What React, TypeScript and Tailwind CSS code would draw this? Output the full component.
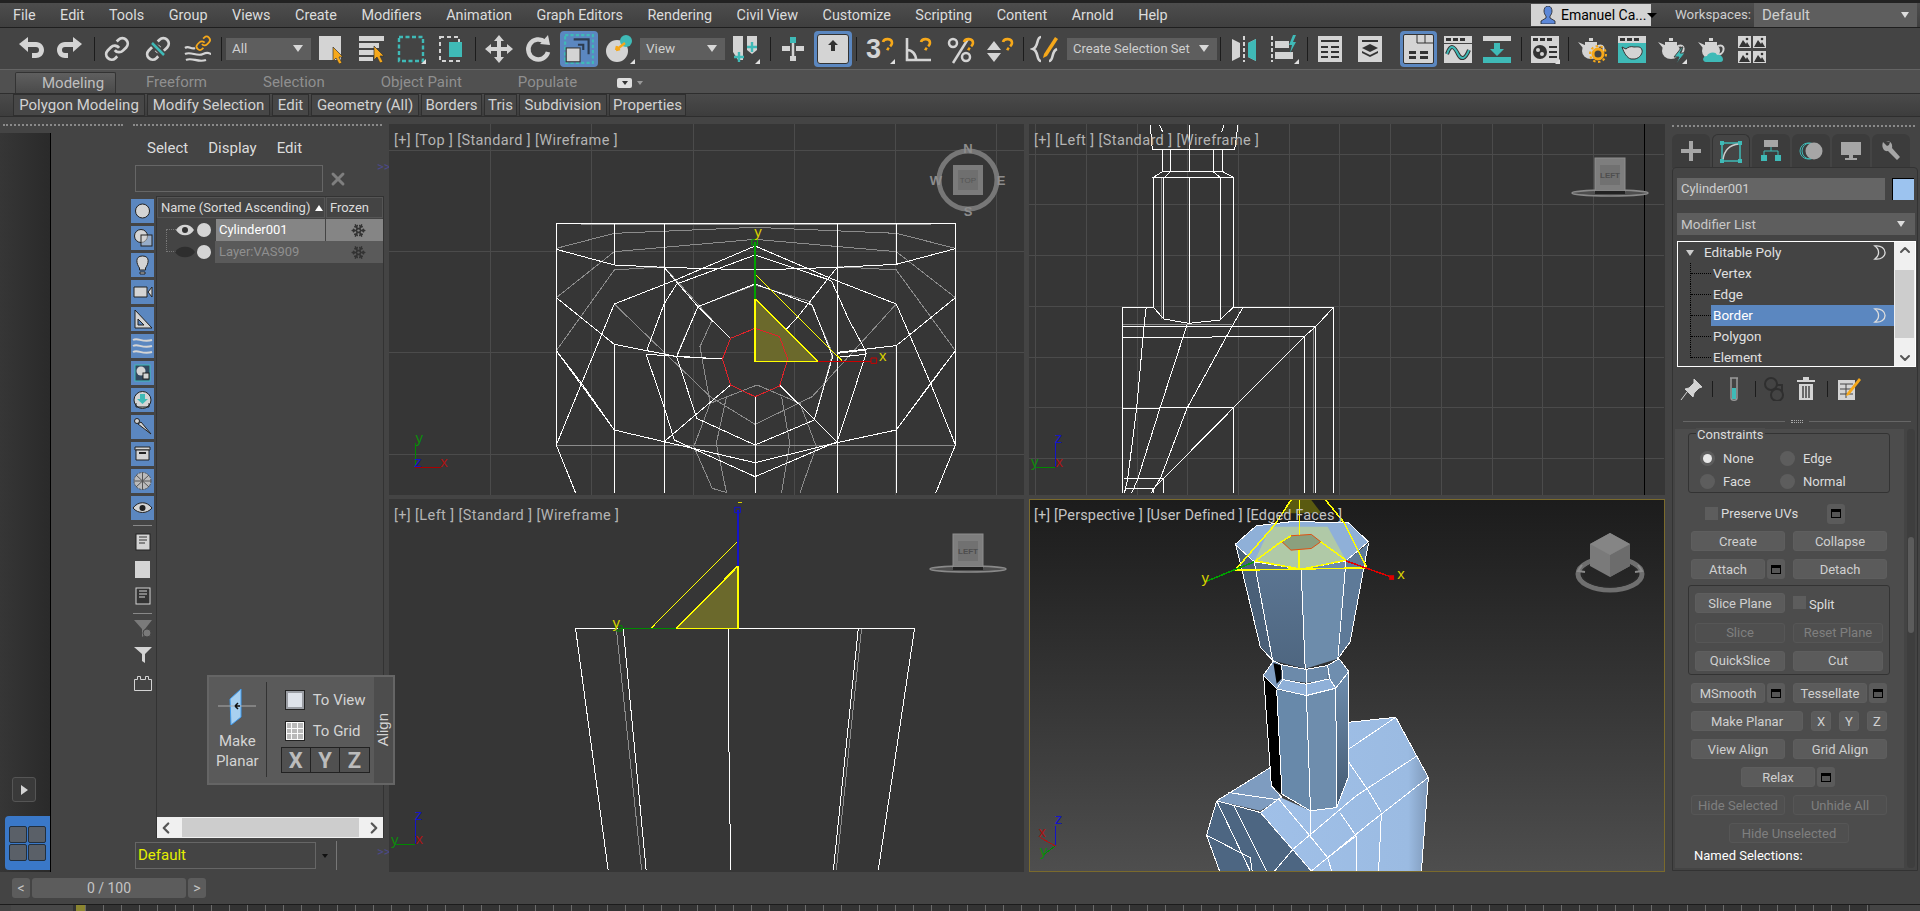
import type { ReactNode } from "react";
import { ChevronDown, ChevronLeft, ChevronRight, ChevronUp, Snowflake, X } from "lucide-react";

const G = "#d4d4d4";
const T = "#3fbab7";
const O = "#f6a81a";

const menus = ["File", "Edit", "Tools", "Group", "Views", "Create", "Modifiers", "Animation", "Graph Editors", "Rendering", "Civil View", "Customize", "Scripting", "Content", "Arnold", "Help"];
const ribbonTabs = ["Freeform", "Selection", "Object Paint", "Populate"];
const panels = [
  { name: "Polygon Modeling", w: "w-[132px]" },
  { name: "Modify Selection", w: "w-[123px]" },
  { name: "Edit", w: "w-[37px]" },
  { name: "Geometry (All)", w: "w-[108px]" },
  { name: "Borders", w: "w-[61px]" },
  { name: "Tris", w: "w-[33px]" },
  { name: "Subdivision", w: "w-[88px]" },
  { name: "Properties", w: "w-[77px]" },
];

const Ic = ({ c = "", children }: { c?: string; children: ReactNode }) => (
  <svg viewBox="0 0 30 30" className={`w-[30px] h-[30px] shrink-0 ${c}`}>{children}</svg>
);
const Sep = ({ c = "" }: { c?: string }) => <div className={`w-px h-[24px] bg-[#1c1c1c] shrink-0 ${c}`} />;
const Fly = () => <path d="M30 25v5h-5z" fill="#e0e0e0" />;
const Cursor = ({ x = 0, y = 0 }: { x?: number; y?: number }) => (
  <path transform={`translate(${x} ${y})`} d="M18 13l10 10h-4l3 6-3 1-3-6-3 3z" fill={O} stroke="#333" strokeWidth=".7" />
);
const Query = ({ x = 0 }: { x?: number }) => (
  <path transform={`translate(${x} 0)`} d="M17 8c1-4 9-4 9 1 0 3-4 4-5 8" fill="none" stroke={O} strokeWidth="2.6" strokeDasharray="16 2 3" />
);
const LinkShape = ({ color = G }: { color?: string }) => (
  <g transform="translate(2 2) scale(1.08)" fill="none" stroke={color} strokeWidth="2.6">
    <path d="M10 13a5 5 0 0 0 7.54.54l3-3a5 5 0 0 0-7.07-7.07l-1.72 1.71" />
    <path d="M14 11a5 5 0 0 0-7.54-.54l-3 3a5 5 0 0 0 7.07 7.07l1.71-1.71" />
  </g>
);
const Teapot = () => (
  <g fill={G}>
    <ellipse cx="14" cy="17" rx="9" ry="8" />
    <path d="M12 4h4v3h-4zM8 8h12v3H8zM1 8l9 4v7z" />
    <path d="M21 12c7-3 8 7 0 9" fill="none" stroke={G} strokeWidth="2" />
  </g>
);
const Dropdown = ({ label, w, c = "" }: { label: string; w: string; c?: string }) => (
  <div className={`${w} ${c} h-[22px] bg-[#5e5e5e] flex items-center justify-between pl-[6px] pr-[8px] text-[13.500px] text-[#cfcfcf] whitespace-nowrap shrink-0`}>
    <span>{label}</span>
    <span className="w-0 h-0 border-x-[5px] border-x-transparent border-t-[7px] border-t-[#d8d8d8]" />
  </div>
);

const MainToolbar = () => (
  <div className="h-[41px] flex items-center bg-[#444444] shrink-0">
    <Ic c="ml-[16px]"><path d="M3 10l9-7v5h8c5 0 8 4 8 8 0 5-4 8-8 8h-4v-5h4c2 0 3-1 3-3s-1-3-3-3h-8v5z" fill={G} /></Ic>
    <Ic c="ml-[9px]"><path d="M27 10l-9-7v5h-8c-5 0-8 4-8 8 0 5 4 8 8 8h3v-5h-3c-2 0-3-1-3-3s1-3 3-3h8v5z" fill={G} /></Ic>
    <Sep c="ml-[9px]" />
    <Ic c="ml-[7px]"><LinkShape /></Ic>
    <Ic c="ml-[11px]"><LinkShape /><path d="M8 8l14 14" stroke="#444" strokeWidth="6" /><path d="M9 9l12 12" stroke={T} strokeWidth="2.5" /></Ic>
    <Ic c="ml-[10px]">
      <path d="M2 14c4-3 6 2 10 0M2 20c6-3 12 3 18 0s6 0 8 0M3 26c6-3 12 3 20 0" fill="none" stroke={G} strokeWidth="2.2" />
      <g transform="translate(11 0) scale(.62)"><LinkShape color={O} /></g>
    </Ic>
    <Sep c="ml-[8px]" />
    <Dropdown label="All" w="w-[85px]" c="ml-[4px]" />
    <Ic c="ml-[5px]"><rect x="3" y="2" width="22" height="24" fill={G} /><Cursor x={-1} /></Ic>
    <Ic c="ml-[11px]">
      <path d="M2 2h25v5H2zM2 9h20v5H2zM2 16h16v5H2zM2 23h14v4H2z" fill={G} /><Cursor x={-1} y={-1} />
    </Ic>
    <Ic c="ml-[9px]"><rect x="3" y="3" width="24" height="24" fill="none" stroke={T} strokeWidth="2.4" strokeDasharray="4 2.5" /><Fly /></Ic>
    <Ic c="ml-[9px]">
      <rect x="5" y="3" width="19" height="24" fill="none" stroke={G} strokeWidth="2" strokeDasharray="4 3" />
      <rect x="14" y="8" width="13" height="15" fill={T} />
    </Ic>
    <Sep c="ml-[10px]" />
    <Ic c="ml-[8px]">
      <path d="M15 1l5 6h-3v6h6v-3l6 5-6 5v-3h-6v6h3l-5 6-5-6h3v-6H7v3l-6-5 6-5v3h6V7h-3z" fill={G} />
    </Ic>
    <Ic c="ml-[9px]">
      <path d="M22 8a10 10 0 1 0 3 10" fill="none" stroke={G} strokeWidth="4.5" /><path d="M17 10l10 1 -2-10z" fill={G} />
    </Ic>
    <div className="ml-[7px] w-[38px] h-[36px] rounded-[4px] bg-[#5b87c0] flex items-center justify-center shrink-0">
      <svg viewBox="0 0 30 30" className="w-[32px] h-[32px]">
        <rect x="2" y="2" width="26" height="26" fill="none" stroke={T} strokeWidth="2" strokeDasharray="3 2" />
        <path d="M10 6h14v14" fill="none" stroke="#2c3b4e" strokeWidth="2" />
        <path d="M14 11h5v5" fill="none" stroke="#2c3b4e" strokeWidth="2" />
        <rect x="3" y="14" width="13" height="13" fill={G} stroke="#333" />
      </svg>
    </div>
    <Ic c="ml-[7px]">
      <circle cx="12" cy="17" r="11" fill={G} /><circle cx="21" cy="7" r="6" fill={T} /><path d="M20 9l-9 7m0 0l1-4m-1 4l4-1" stroke={O} strokeWidth="2.4" fill="none" /><Fly />
    </Ic>
    <Dropdown label="View" w="w-[85px]" c="ml-[5px]" />
    <Ic c="ml-[5px]">
      <path d="M3 2h10v24l-5 0-5-8zM17 2h10v14l-5 4-5-4z" fill={G} />
      <path d="M9 18v10M4 23h10M22 8v10M17 13h10" stroke={T} strokeWidth="2.4" /><Fly />
    </Ic>
    <Sep c="ml-[10px]" />
    <Ic c="ml-[7px]">
      <path d="M12 3h6v6h-6z" fill={T} /><path d="M15 9v17" stroke={G} strokeWidth="2.5" /><path d="M4 12h8v5H4zM18 12h8v5h-8zM12 22h6v5h-6z" fill={G} />
    </Ic>
    <div className="ml-[6px] w-[38px] h-[36px] rounded-[4px] bg-[#5b87c0] flex items-center justify-center shrink-0">
      <div className="w-[32px] h-[30px] bg-[#d4d4d4] border border-[#333] rounded-[3px] flex items-start justify-center pt-[5px]">
        <svg viewBox="0 0 12 12" className="w-[12px] h-[12px]"><path d="M6 0l5 5H8v6H4V5H1z" fill="#333" /></svg>
      </div>
    </div>
    <Sep c="ml-[4px]" />
    <div className="ml-[8px] w-[30px] h-[30px] relative shrink-0 overflow-visible">
      <span className="absolute left-[1px] top-[2px] text-[27px] leading-[27px] font-bold text-[#d4d4d4] font-['Liberation_Sans',sans-serif]">3</span>
      <Ic c="absolute left-0 top-0"><Query x={1} /><Fly /></Ic>
    </div>
    <Ic c="ml-[8px]"><path d="M4 4v22h24M4 16c5 0 9 4 9 10" fill="none" stroke={G} strokeWidth="2.6" /><Query x={1} /></Ic>
    <Ic c="ml-[12px]"><circle cx="8" cy="9" r="4" fill="none" stroke={G} strokeWidth="2.5" /><circle cx="21" cy="23" r="4" fill="none" stroke={G} strokeWidth="2.5" /><path d="M23 5L8 29" stroke={G} strokeWidth="2.5" /><Query x={2} /></Ic>
    <Ic c="ml-[10px]"><path d="M9 7l7 9H2zM2 19h14l-7 9z" fill={G} /><Query x={1} /></Ic>
    <Sep c="ml-[8px]" />
    <Ic c="ml-[6px]">
      <path d="M11 3C6 3 9 13 3 15c6 2 3 12 8 12M19 27c5 0 2-10 8-12" fill="none" stroke={G} strokeWidth="2.6" /><path d="M14 20L25 3l3 2-11 17-4 2z" fill={O} />
    </Ic>
    <Dropdown label="Create Selection Set" w="w-[150px]" c="ml-[7px] !text-[13px]" />
    <Sep c="ml-[3px]" />
    <Ic c="ml-[8px]">
      <path d="M3 5l8 4v14l-8 4zM27 5l-8 4v14l8 4z" fill={G} /><path d="M27 5l-8 4v14l8 4z" fill={T} /><path d="M15 2v26" stroke={G} strokeWidth="2" strokeDasharray="4 2" />
    </Ic>
    <Ic c="ml-[10px]">
      <path d="M3 2v26" stroke={G} strokeWidth="2" strokeDasharray="4 2" /><path d="M6 7h14v7H6zM6 18h18v7H6z" fill={G} /><path d="M24 1l-4 10h3l-2 8 6-11h-3l3-7z" fill={T} /><Fly />
    </Ic>
    <Sep c="ml-[8px]" />
    <Ic c="ml-[7px]">
      <rect x="3" y="2" width="24" height="26" fill={G} /><path d="M6 6h18v2H6zM6 12h7v2H6zM16 12h8v2h-8zM6 17h7v2H6zM16 17h8v2h-8zM6 22h7v2H6zM16 22h8v2h-8z" fill="#333" />
    </Ic>
    <Ic c="ml-[10px]">
      <rect x="3" y="2" width="24" height="26" fill={G} /><path d="M7 6h16v2H7zM15 10l8 4-8 4-8-4zM7 17l8 4 8-4v2l-8 4-8-4z" fill="#333" />
    </Ic>
    <div className="ml-[15px] w-[37px] h-[36px] rounded-[4px] bg-[#5b87c0] flex items-center justify-center shrink-0">
      <div className="w-[31px] h-[30px] bg-[#d4d4d4] border border-[#333] rounded-[2px] relative">
        <svg viewBox="0 0 29 28" className="w-full h-full"><path d="M13 0v8h16M21 0v8" stroke="#333" fill="none" strokeWidth="1" /><path d="M5 16h7v3H5zM16 16h8v3h-8zM5 21h7v3H5zM16 21h8v3h-8z" fill="#333" /></svg>
      </div>
    </div>
    <Ic c="ml-[6px]">
      <rect x="1" y="2" width="28" height="27" fill={G} /><path d="M3 4h5v3H3zM10 4h5v3h-5zM17 4h5v3h-5z" fill="#333" /><rect x="1" y="9" width="28" height="1" fill="#444" />
      <path d="M4 20c4-12 8-6 11 0s7 6 11-4" fill="none" stroke="#333" strokeWidth="4" /><path d="M4 20c4-12 8-6 11 0s7 6 11-4" fill="none" stroke={T} strokeWidth="2" />
    </Ic>
    <Ic c="ml-[9px]">
      <rect x="1" y="2" width="28" height="5" fill={G} /><path d="M12 9h6v6h4l-7 7-7-7h4z" fill={T} /><rect x="1" y="23" width="28" height="6" fill={T} />
    </Ic>
    <Sep c="ml-[9px]" />
    <Ic c="ml-[8px]">
      <rect x="1" y="2" width="28" height="27" fill={G} /><path d="M3 4h5v3H3zM10 4h5v3h-5zM17 4h5v3h-5z" fill="#333" />
      <circle cx="10" cy="18" r="7" fill="#333" /><circle cx="8" cy="16" r="2" fill={G} /><circle cx="12" cy="20" r="2" fill={G} /><path d="M19 12h8v2h-8zM19 17h8v2h-8zM19 22h8v2h-8z" fill="#333" /><Fly />
    </Ic>
    <Sep c="ml-[8px]" />
    <Ic c="ml-[8px]">
      <Teapot /><circle cx="21" cy="20" r="5" fill="#444" stroke={O} strokeWidth="3" /><circle cx="21" cy="20" r="8" fill="none" stroke={O} strokeWidth="2" strokeDasharray="2.5 2.5" />
    </Ic>
    <Ic c="ml-[10px]">
      <rect x="1" y="2" width="28" height="27" fill={T} /><rect x="1" y="2" width="28" height="7" fill={G} /><path d="M3 4h5v3H3zM10 4h5v3h-5zM17 4h5v3h-5z" fill="#333" />
      <path d="M5 13l4 2c2-2 5-3 8-2 3 0 7-1 8 3 1 3-2 8-7 9h-4c-4-1-7-6-9-12z" fill={G} stroke="#333" />
    </Ic>
    <Ic c="ml-[10px]"><Teapot /><path d="M25 13l-8 10h5l-3 7 9-11h-5l3-6z" fill={T} stroke="#444" /><Fly /></Ic>
    <Ic c="ml-[10px]"><Teapot /><path d="M9 28c-4 0-4-6 1-6 1-4 9-5 10-1 5-2 9 7 3 7z" fill={T} /></Ic>
    <Ic c="ml-[10px]">
      {[[1, 2], [16, 2], [1, 17], [16, 17]].map(([x, y]) => (
        <g key={`${x}-${y}`} transform={`translate(${x} ${y})`}>
          <rect width="13" height="12" fill={G} /><path d="M1 11l4-7 3 4 1-2 3 5z" fill="#333" /><circle cx="9" cy="3" r="1.3" fill="#333" />
        </g>
      ))}
    </Ic>
  </div>
);

const Ribbon = () => (
  <>
    <div className="h-[24px] border-t border-[#646464] bg-[#505050] flex items-end pl-[15px] shrink-0">
      <div className="w-[101px] h-[21px] bg-gradient-to-b from-[#5f5f5f] to-[#4a4a4a] border border-b-0 border-[#333] rounded-t-[2px] pl-[26px] text-[15px] leading-[20px] text-[#bfbfbf]">Modeling</div>
      <div className="flex h-[21px] items-center text-[15px] text-[#8f8f8f] pl-[30px] gap-[56px]">
        {ribbonTabs.map((t) => <span key={t}>{t}</span>)}
      </div>
      <div className="flex h-[21px] items-center ml-[40px] gap-[5px]">
        <span className="w-[15px] h-[10px] bg-[#dedede] rounded-[2px] flex items-center justify-center"><span className="w-0 h-0 border-x-[3px] border-x-transparent border-t-[4px] border-t-[#333]" /></span>
        <span className="w-0 h-0 border-x-[3px] border-x-transparent border-t-[4px] border-t-[#999]" />
      </div>
    </div>
    <div className="h-[24px] border-y border-[#2e2e2e] bg-gradient-to-b from-[#4a4a4a] to-[#3d3d3d] flex pl-[13px] gap-[2px] shrink-0">
      {panels.map((p) => (
        <div key={p.name} className={`${p.w} h-[22px] pt-px border border-[#2f2f2f] bg-[#474747] flex items-center justify-center text-[15px] text-[#d2d2d2] whitespace-nowrap`}>{p.name}</div>
      ))}
    </div>
  </>
);

const Handle = ({ w }: { w: string }) => <div className={`${w} border-t-2 border-dotted border-[#8a8a8a]`} />;

const strip = [
  <circle key="a" cx="11.5" cy="12" r="7" fill={G} stroke="#222" />,
  <g key="b" fill={G} stroke="#222"><circle cx="10" cy="10" r="6.5" /><rect x="10" y="9" width="11" height="11" fillOpacity=".5" /></g>,
  <path key="c" d="M11.500 3c-8 0-6 8-3 12v2h6v-2c3-4 5-12-3-12zM9 19h5v2H9z" fill={G} stroke="#222" />,
  <path key="d" d="M3 7h13v10H3zM17 12l4-5v10z" fill={G} stroke="#222" />,
  <path key="e" d="M4 3v18h17zM7 12v6h6z" fill={G} fillRule="evenodd" stroke="#222" />,
  <path key="f" d="M2 6c5-3 9 3 19 0M2 12c5-3 9 3 19 0M2 18c5-3 9 3 19 0" fill="none" stroke={G} strokeWidth="2" />,
  <g key="g"><rect x="4" y="4" width="15" height="16" fill="#33495f" stroke={T} /><circle cx="10" cy="10" r="4.500" fill={G} /><rect x="12" y="12" width="6" height="6" fill={G} stroke="#222" /></g>,
  <g key="h"><circle cx="11.500" cy="12" r="8.500" fill={G} stroke="#222" /><path d="M9 6h5v5h3l-5.500 5L6 11h3z" fill={T} /><path d="M5 15v4h13v-4" fill="none" stroke="#222" /></g>,
  <g key="i"><circle cx="6" cy="6" r="2.500" fill={G} stroke="#222" /><path d="M7 9l3-2 10 12z" fill={G} stroke="#222" /></g>,
  <g key="j"><path d="M4 5h15v3H4z" fill={G} stroke="#222" /><path d="M5 8h13v10H5z" fill={G} stroke="#222" /><path d="M8 10h7v2H8z" fill="#222" /></g>,
  <g key="k"><circle cx="11.500" cy="12" r="8.500" fill="#bbb" stroke="#555" strokeDasharray="2 1" /><path d="M11.500 3v18M3 12h17M5 6l13 12M18 6L5 18" stroke="#555" /></g>,
  <g key="l"><path d="M2 12c5-7 14-7 19 0-5 6-14 6-19 0z" fill={G} stroke="#222" /><circle cx="11.500" cy="12" r="3" fill="#222" /></g>,
];

const SceneExplorer = () => (
  <div className="flex-1 flex flex-col relative">
    <div className="h-[31px] mb-px pl-[96px] flex items-center gap-[20px] text-[15px] text-[#dcdcdc]">
      <span>Select</span><span>Display</span><span>Edit</span>
    </div>
    <div className="h-[27px] pl-[84px] flex items-center">
      <div className="w-[188px] h-[27px] border border-[#666]" />
      <X className="ml-[5px]" size={20} strokeWidth={3.500} color="#7f7f7f" />
    </div>
    <span className="absolute left-[326px] top-[27px] text-[13px] text-[#4c4a8a] leading-none">&gt;&gt;</span>
    <div className="h-[642px] mt-[4px] pl-[80px] flex">
      <div className="w-[23px] pt-[3px] flex flex-col items-center">
        {strip.map((s, i) => (
          <svg key={i} viewBox="0 0 23 24" className="w-[23px] h-[24px] bg-[#5b87c0] mb-[3px] shrink-0">{s}</svg>
        ))}
        <div className="w-[19px] h-px bg-[#888] mt-[2px]" />
        <svg viewBox="0 0 16 18" className="w-[16px] h-[18px] mt-[7px]"><rect x="1" y="1" width="14" height="16" fill={G} stroke="#222" /><path d="M4 4h8M4 7h8M4 10h6" stroke="#333" strokeWidth="1.100" /></svg>
        <div className="w-[15px] h-[17px] bg-[#d4d4d4] mt-[10px]" />
        <svg viewBox="0 0 16 18" className="w-[16px] h-[18px] mt-[9px]"><rect x="1" y="1" width="14" height="16" fill="#333" stroke={G} /><path d="M4 4h8M4 7h8M4 10h6" stroke={G} strokeWidth="1.100" /></svg>
        <div className="w-[19px] h-px bg-[#888] mt-[8px]" />
        <svg viewBox="0 0 18 19" className="w-[18px] h-[19px] mt-[6px]"><path d="M0 0h18l-7 9v6l-3 2V9z" fill="#7a7a7a" /><circle cx="13" cy="13" r="4" fill="#7a7a7a" stroke="#444" /></svg>
        <svg viewBox="0 0 18 16" className="w-[18px] h-[16px] mt-[8px]"><path d="M0 0h18l-7 7v9l-3-2V7z" fill={G} /></svg>
        <svg viewBox="0 0 18 16" className="w-[18px] h-[16px] mt-[12px]"><path d="M.5 15.500v-11h3v-3h3v3h5v-3h3v3h3v11z" fill="none" stroke={G} /></svg>
      </div>
      <div className="ml-[2px] w-[228px] border-x border-[#333] flex flex-col">
        <div className="h-[22px] flex text-[13px] text-[#dcdcdc] border-t border-[#333] whitespace-nowrap">
          <div className="w-[168px] border border-[#555] flex items-center justify-between pl-[3px] pr-[1px]">
            <span>Name (Sorted Ascending)</span>
            <span className="w-0 h-0 border-x-[4px] border-x-transparent border-b-[6px] border-b-white" />
          </div>
          <div className="flex-1 ml-px border border-[#555] flex items-center pl-[3px]">Frozen</div>
        </div>
        <div className="flex-1">
          <div className="h-[22px] mt-px flex items-center">
            <span className="w-[10px] h-[12px] ml-[9px] border-l border-t border-dotted border-[#777] self-end shrink-0" />
            <svg viewBox="0 0 18 12" className="w-[18px] h-[12px] shrink-0"><path d="M0 6c4-7 14-7 18 0-4 7-14 7-18 0z" fill={G} /><circle cx="9" cy="6" r="3" fill="#333" /></svg>
            <span className="w-[14px] h-[14px] rounded-full bg-[#d4d4d4] ml-[3px] shrink-0" />
            <div className="ml-[5px] w-[109px] h-full bg-[#858585] flex items-center pl-[3px] text-[13px] text-white">Cylinder001</div>
            <div className="ml-px flex-1 h-full bg-[#858585] flex items-center justify-center pl-[7px]"><Snowflake size={15} color="#333" strokeWidth={2.500} /></div>
          </div>
          <div className="h-[22px] flex items-center">
            <span className="w-[10px] h-[11px] ml-[9px] border-l border-b border-dotted border-[#777] self-start shrink-0" />
            <svg viewBox="0 0 20 12" className="w-[20px] h-[12px] -ml-px shrink-0"><path d="M0 6c4-7 16-7 20 0-4 7-16 7-20 0z" fill="#2e2e2e" /></svg>
            <span className="w-[14px] h-[14px] rounded-full bg-[#d4d4d4] ml-[2px] shrink-0" />
            <div className="ml-[4px] flex-1 h-full bg-[#5a5a5a] flex items-center justify-between pl-[4px] pr-[17px] text-[13px] text-[#8f8f8f]">
              <span>Layer:VAS909</span><Snowflake size={15} color="#333" strokeWidth={2.500} />
            </div>
          </div>
        </div>
        <div className="h-[21px] bg-[#f0f0f0] flex items-center justify-between">
          <ChevronLeft size={18} color="#555" strokeWidth={3} />
          <div className="w-[177px] h-[19px] bg-[#cdcdcd]" />
          <ChevronRight size={18} color="#555" strokeWidth={3} />
        </div>
      </div>
    </div>
    <div className="h-[27px] mt-[4px] pl-[84px] flex items-center relative">
      <div className="w-[181px] h-[27px] border border-[#666] flex items-center pl-[2px] text-[15px] text-[#e4f000]">Default</div>
      <span className="ml-[6px] w-0 h-0 border-x-[3px] border-x-transparent border-t-[4px] border-t-[#111]" />
      <span className="ml-[8px] w-px h-[29px] bg-[#777]" />
      <span className="absolute left-[326px] top-[3px] text-[13px] text-[#4c4a8a] leading-none">&gt;&gt;</span>
    </div>
  </div>
);

const LeftColumn = () => (
  <div className="w-[389px] flex flex-col shrink-0">
    <div className="h-[16px] flex items-center pl-[3px] gap-[10px]">
      <Handle w="w-[120px]" />
      <Handle w="w-[249px]" />
    </div>
    <div className="flex-1 flex">
      <div className="w-[51px] border-r border-black bg-gradient-to-r from-[#363636] to-[#2a2a2a] flex flex-col justify-end pb-[2px] shrink-0">
        <div className="w-[24px] h-[25px] ml-[12px] mb-[14px] rounded-[3px] bg-[#3a3a3a] border border-[#555] flex items-center justify-center">
          <span className="w-0 h-0 border-y-[5px] border-y-transparent border-l-[7px] border-l-[#d4d4d4]" />
        </div>
        <div className="w-[45px] h-[54px] ml-[5px] rounded-l-[4px] bg-[#3a78c8] pl-[4px] flex items-center">
          <div className="grid grid-cols-2 gap-px">
            {[0, 1, 2, 3].map((i) => <span key={i} className="w-[18px] h-[17px] rounded-[2px] bg-[#5a6068] border border-[#22303f]" />)}
          </div>
        </div>
      </div>
      <SceneExplorer />
    </div>
  </div>
);

const Wires = ({ pts, color, w = 1 }: { pts: string[]; color: string; w?: number }) => (
  <>
    {pts.map((p) => (
      <polyline key={p} points={p} fill="none" stroke={color} strokeWidth={w} vectorEffect="non-scaling-stroke" shapeRendering="crispEdges" />
    ))}
  </>
);
const Tag = ({ x, y, color, s, size = 15 }: { x: number; y: number; color: string; s: string; size?: number }) => (
  <text transform={`translate(${x} ${y}) scale(2.45 3)`} fontSize={size} fill={color} textAnchor="middle" fontFamily="'Liberation Sans',sans-serif">{s}</text>
);
const Mark = ({ x, y, color, fill = "none" }: { x: number; y: number; color: string; fill?: string }) => (
  <rect x={x - 7} y={y - 8} width="14" height="16" fill={fill} stroke={color} vectorEffect="non-scaling-stroke" />
);

const vLabel = "absolute left-[5px] top-[8px] text-[14.500px] leading-[18px] whitespace-pre text-[#b4b4b4] tracking-[0.4px]";

const TopViewport = () => (
  <div className="relative bg-[#363636] overflow-hidden">
    <svg viewBox="-2 12 1556 1113" preserveAspectRatio="none" className="w-full h-full block">
      <Wires
        color="#4b4b4b"
        pts={[
          ...[246, 493, 743, 991, 1238, 1486].map((x) => `${x},12 ${x},1125`),
          ...[92, 395, 698, 1003].map((y) => `-2,${y} 1554,${y}`),
        ]}
      />
      <Wires
        color="#8c8c8c"
        pts={[
          "408,385 550,340 895,322 1241,340 1386,385",
          "468,313 1325,313",
          "550,395 895,358 1241,395",
          "408,533 550,395",
          "1386,533 1241,395",
          "408,692 550,450 672,440",
          "1386,692 1241,450 1096,440",
          "550,552 785,830 895,913 1035,830 1241,552",
          "672,440 790,600 835,655",
          "705,700 755,560 895,495 1030,545 1085,700 1040,900",
          "790,600 760,680 785,850 900,795 1005,850 1045,980 1005,1118",
          "785,850 745,980 790,1105 826,1118",
          "825,830 800,970 825,1118",
          "960,830 980,970 960,1118",
          "408,975 1386,975",
        ]}
      />
      <Wires
        color="#ffffff"
        pts={[
          "408,310 1386,310 1386,975 1338,1118",
          "408,310 408,975 455,1118",
          "550,310 550,435",
          "672,310 672,440",
          "1096,310 1096,440",
          "1241,310 1241,435",
          "408,388 550,435 672,442 895,450 1096,442 1241,433 1386,386",
          "550,552 700,480 895,378 1090,480 1241,552",
          "703,492 895,405 1082,482",
          "672,442 755,560 835,655",
          "1096,442 1000,590 955,650",
          "408,533 550,673 705,710 815,717",
          "1386,533 1241,677 1096,697",
          "408,692 550,930 672,965 895,1028 1096,968 1241,930 1386,692",
          "408,975 470,790 550,552",
          "1386,975 1325,790 1241,552",
          "408,692 470,790 550,930",
          "1386,692 1325,790 1241,930",
          "703,710 755,560 895,492 1035,555 1085,710 1040,900 895,975 752,895 703,710",
          "628,703 672,860 697,960 895,1070 1096,965 1125,860 1167,700",
          "703,492 672,552 630,690",
          "1082,482 1125,600 1165,690",
          "628,703 815,717",
          "1096,700 1165,690 1165,703 1096,712",
          "550,675 550,1118",
          "1241,677 1241,1118",
          "672,442 672,1118",
          "1096,442 1096,1118",
          "835,795 672,965",
          "955,795 1095,965",
          "895,830 895,1118",
          "895,378 895,450",
          "980,716 1040,716",
        ]}
      />
      <polygon points="895,537 895,724 1048,724" fill="#6b692c" />
      <Wires color="#e0232a" pts={["895,625 955,650 975,717 955,798 895,830 835,795 815,717 835,655 895,625"]} />
      <Wires color="#ffff00" w={1.500} pts={["895,537 895,724 1048,724 895,537"]} />
      <Wires color="#ffff00" pts={["895,462 1108,722"]} />
      <Wires color="#00a000" w={1.500} pts={["895,367 895,537"]} />
      <Wires color="#cc0000" pts={["1048,724 1180,724"]} />
      <Mark x={894} y={367} color="#00a000" />
      <Mark x={1186} y={722} color="#cc0000" />
      <Tag x={1208} y={722} color="#d8d000" s="x" />
      <Tag x={902} y={350} color="#d8d000" s="y" />
      <Wires color="#008a00" pts={["62,970 62,1042"]} />
      <Wires color="#aa0000" pts={["62,1042 125,1042"]} />
      <Tag x={72} y={968} color="#0d8a0d" s="y" />
      <Tag x={69} y={1042} color="#1414c8" s="z" />
      <Tag x={133} y={1042} color="#aa1414" s="x" />
    </svg>
    <span className={vLabel}>[+] [Top ] [Standard ] [Wireframe ]</span>
    <svg viewBox="0 0 80 80" className="absolute left-[539px] top-[16px] w-[80px] h-[80px]">
      <circle cx="40" cy="40" r="29" fill="none" stroke="#777" strokeWidth="5" />
      <rect x="25" y="25" width="30" height="30" fill="#7b7b7b" />
      <rect x="30" y="30" width="20" height="20" fill="#6f6f6f" />
      <g fontFamily="'Liberation Sans',sans-serif" fontWeight="700" textAnchor="middle" fill="#8d8d8d" fontSize="13">
        <text x="40" y="13">N</text><text x="40" y="76">S</text><text x="8" y="45">W</text><text x="73" y="45">E</text>
      </g>
      <text x="40" y="43" fontSize="8" textAnchor="middle" fill="#555" fontFamily="'Liberation Sans',sans-serif">TOP</text>
    </svg>
  </div>
);

const LeftCube = ({ c }: { c: string }) => (
  <svg viewBox="0 0 80 60" className={`absolute w-[80px] h-[60px] ${c}`}>
    <ellipse cx="40" cy="48" rx="38" ry="3" fill="#4e4e4e" stroke="#8a8a8a" strokeWidth="1.500" />
    <rect x="25" y="13" width="30" height="33" fill="#7e7e7e" stroke="#8e8e8e" />
    <rect x="30" y="20" width="20" height="20" fill="#717171" />
    <rect x="25" y="46" width="30" height="3" fill="#222" />
    <text x="40" y="33" fontSize="8" fontWeight="700" textAnchor="middle" fill="#4e4e4e" fontFamily="'Liberation Sans',sans-serif">LEFT</text>
  </svg>
);

const RightViewport = () => (
  <div className="relative bg-[#363636] overflow-hidden">
    <svg viewBox="-2 12 1558 1113" preserveAspectRatio="none" className="w-full h-full block">
      <Wires
        color="#4b4b4b"
        pts={[
          ...[13, 138, 263, 386, 510, 636, 758, 883, 1008, 1133, 1256, 1380].map((x) => `${x},12 ${x},1125`),
          ...[103, 253, 406, 559, 712, 862, 1015].map((y) => `-2,${y} 1554,${y}`),
        ]}
      />
      <Wires color="#000000" pts={["1505,12 1505,1125"]} />
      <Wires color="#8c8c8c" pts={["323,172 323,597", "226,613 495,613", "695,620 695,1118"]} />
      <Wires
        color="#ffffff"
        pts={[
          "295,15 300,88 502,88 510,15",
          "318,15 325,35",
          "390,15 390,88",
          "476,15 470,35",
          "325,88 325,155 473,155 473,88",
          "345,88 345,155",
          "449,88 449,155",
          "392,88 392,155",
          "325,155 303,172 498,172 473,155",
          "345,155 330,172",
          "449,155 466,172",
          "303,172 303,562 226,562 226,745",
          "328,172 328,597",
          "466,172 466,600",
          "498,172 498,562 744,562 744,1118",
          "390,172 390,610",
          "303,562 328,597 390,610 466,600 498,562",
          "285,562 280,615 262,860 240,1075 232,1118",
          "385,615 320,860 265,1075 250,1118",
          "522,562 495,620 385,865 320,1075 298,1118",
          "226,620 700,620",
          "228,652 672,650",
          "744,562 700,620 672,650 500,862 328,1075 300,1110",
          "672,650 672,1118",
          "700,620 700,1118",
          "228,652 228,1118",
          "228,865 500,862",
          "498,862 498,1118",
          "230,1075 327,1075 327,1118",
          "232,1105 302,1105 302,1118",
        ]}
      />
      <Wires color="#1414c8" pts={["62,970 62,1042"]} />
      <Wires color="#008a00" pts={["15,1042 62,1042"]} />
      <Tag x={70} y={968} color="#1414c8" s="z" />
      <Tag x={12} y={1042} color="#0d8a0d" s="y" />
      <Tag x={72} y={1042} color="#aa1414" s="x" />
    </svg>
    <span className={vLabel}>[+] [Left ] [Standard ] [Wireframe ]</span>
    <LeftCube c="left-[541px] top-[21px]" />
  </div>
);

const BottomLeftViewport = () => (
  <div className="relative bg-[#363636] overflow-hidden">
    <svg viewBox="-2 12 1556 1119" preserveAspectRatio="none" className="w-full h-full block">
      <polygon points="853,213 853,400 702,400" fill="#6b692c" />
      <Wires color="#8c8c8c" pts={["555,400 617,1125", "1156,400 1094,1125"]} />
      <Wires
        color="#ffffff"
        pts={["453,400 1288,400", "455,400 535,1125", "1286,400 1197,1125", "572,400 628,1125", "830,400 830,670 834,1020 834,1125", "1148,400 1087,1125"]}
      />
      <Wires color="#ffff00" w={1.500} pts={["853,213 853,400 702,400 853,213"]} />
      <Wires color="#ffff00" pts={["853,138 640,400"]} />
      <Wires color="#1414c8" w={1.500} pts={["853,45 853,213"]} />
      <Wires color="#008a00" w={1.500} pts={["560,400 702,400"]} />
      <Mark x={852} y={45} color="#1414c8" />
      <Mark x={562} y={400} color="#008a00" />
      <Tag x={555} y={398} color="#d8d000" s="y" />
      <Wires color="#d8d000" pts={["852,21 864,21"]} />
      <Wires color="#1414c8" pts={["62,975 62,1048"]} />
      <Wires color="#008a00" pts={["15,1048 62,1048"]} />
      <Tag x={70} y={975} color="#1414c8" s="z" />
      <Tag x={12} y={1050} color="#0d8a0d" s="y" />
      <Tag x={72} y={1048} color="#aa1414" s="x" />
    </svg>
    <span className={vLabel}>[+] [Left ] [Standard ] [Wireframe ]</span>
    <LeftCube c="left-[539px] top-[22px]" />
  </div>
);

const faces: { p: string; f: string }[] = [
  { p: "782,680 897,665 977,845 960,1125 690,1125 565,950 615,905 688,945 752,935 782,840", f: "url(#lit)" },
  { p: "458,915 590,815 593,870 618,905 565,945", f: "#7e9cc0" },
  { p: "458,915 565,950 690,1125 465,1125 433,1018", f: "#4d6682" },
  { p: "503,148 555,92 640,80 780,82 830,140 775,197 665,222 550,200", f: "#8fb0d8" },
  { p: "590,95 730,95 775,195 665,222 550,200", f: "#b0c9a7" },
  { p: "618,55 640,15 690,15 715,55", f: "#5a5a10" },
  { p: "505,150 550,200 595,495 565,455", f: "#4a6078" },
  { p: "550,200 665,222 675,520 595,495", f: "url(#neckA)" },
  { p: "665,222 775,197 755,490 675,520", f: "#6d8cab" },
  { p: "775,197 830,145 785,440 755,490", f: "#5e7a98" },
  { p: "597,497 572,540 605,580 620,555 617,510", f: "#7e9cc0" },
  { p: "617,508 677,522 730,510 730,555 677,562 620,552", f: "#6c8aaa" },
  { p: "758,490 782,528 750,578 730,545 728,510", f: "#6f8eaf" },
  { p: "605,580 678,600 750,578 735,550 677,566 620,552", f: "#8fb0d8" },
  { p: "573,540 605,580 618,895 592,870", f: "#000000" },
  { p: "597,503 617,510 617,550 605,565", f: "#000000" },
  { p: "605,582 678,600 688,945 618,895", f: "#6889aa" },
  { p: "678,600 750,578 752,935 688,945", f: "#6e8dad" },
  { p: "750,578 782,528 782,840 752,935", f: "url(#neckB)" },
];

const PerspViewport = () => (
  <div className="relative bg-gradient-to-b from-[#1c1c1c] to-[#4e4e4e] border border-[#7a6a2c] overflow-hidden">
    <svg viewBox="0 15 1555 1110" preserveAspectRatio="none" className="w-full h-full block">
      <defs>
        <linearGradient id="lit" x1="1" y1="0" x2="0" y2="0">
          <stop offset="0" stopColor="#7e98b8" /><stop offset=".12" stopColor="#9bbbe2" /><stop offset="1" stopColor="#a0c0e8" />
        </linearGradient>
        <linearGradient id="neckA" x1="0" y1="0" x2="0" y2="1">
          <stop offset="0" stopColor="#5c7693" /><stop offset="1" stopColor="#4e6680" />
        </linearGradient>
        <linearGradient id="neckB" x1="0" y1="0" x2="0" y2="1">
          <stop offset="0" stopColor="#6f8eaf" /><stop offset="1" stopColor="#425870" />
        </linearGradient>
      </defs>
      {faces.map((f) => <polygon key={f.p} points={f.p} fill={f.f} />)}
      <polygon points="618,140 640,122 690,118 713,140 690,160 640,165" fill="#8ba07e" stroke="#e05010" vectorEffect="non-scaling-stroke" />
      <Wires
        color="#ffffff"
        pts={[
          "503,148 555,92 640,80 780,82 830,140 775,197 665,222 550,200 503,148",
          "505,150 520,225 565,455 595,495",
          "550,200 595,495",
          "665,222 675,520",
          "775,197 755,490",
          "830,145 785,440 755,490",
          "595,495 617,508 677,522 730,510 758,490",
          "597,497 572,540 605,580 678,600 750,578 782,528 758,490",
          "620,552 677,566 735,550",
          "617,508 620,552 605,580",
          "730,510 735,550 750,578",
          "677,522 677,600",
          "573,540 592,870 618,905",
          "605,582 618,895 688,945 752,935 782,840 782,528",
          "678,600 688,945",
          "750,578 752,935",
          "782,680 897,665 977,845 960,1125",
          "782,760 897,665",
          "782,800 830,885 862,950",
          "977,845 830,985 690,1125",
          "950,780 800,900 645,1060",
          "862,950 855,1125",
          "800,1020 800,1125",
          "688,945 688,1025",
          "760,950 800,1020 730,1085 740,1125",
          "565,950 690,1125",
          "610,910 690,1025 730,1085",
          "458,915 590,815",
          "458,915 565,950 615,905",
          "485,890 610,912",
          "458,915 433,1018 465,1125",
          "458,915 540,1125",
          "500,930 580,1125",
          "433,1018 540,1085 545,1125",
          "645,1060 600,1125",
        ]}
      />
      <Wires color="#ffff00" pts={["503,225 825,218", "503,225 600,90 640,15", "825,215 770,82 725,15", "553,197 610,145 640,122", "775,195 713,140", "553,197 665,222 775,195", "660,222 660,165"]} w={1.500} />
      <Wires color="#ffff00" pts={["660,15 660,120"]} />
      <Wires color="#00a000" w={1.500} pts={["433,258 550,200"]} />
      <Wires color="#e00000" w={1.500} pts={["775,197 885,245"]} />
      <rect x="881" y="240" width="12" height="14" fill="#e00000" />
      <Tag x={910} y={250} color="#d8d000" s="x" />
      <Tag x={430} y={264} color="#d8d000" s="y" />
      <Wires color="#1414c8" w={1.500} pts={["62,990 62,1050"]} />
      <Wires color="#aa1414" pts={["25,1025 62,1050"]} />
      <Wires color="#008a00" pts={["35,1075 62,1050"]} />
      <Tag x={70} y={985} color="#1414c8" s="z" />
      <Tag x={30} y={1022} color="#aa1414" s="x" />
      <Tag x={33} y={1080} color="#0d8a0d" s="y" />
    </svg>
    <span className={`${vLabel} !left-[4px] !top-[7px] !text-[#c4c4c4] !tracking-[0.15px]`}>[+] [Perspective ] [User Defined ] [Edged Faces ]</span>
    <svg viewBox="0 0 80 80" className="absolute left-[540px] top-[17px] w-[80px] h-[80px]">
      <ellipse cx="40" cy="57" rx="32" ry="16" fill="none" stroke="#6f6f6f" strokeWidth="5" />
      <ellipse cx="40" cy="57" rx="28" ry="13" fill="none" stroke="#2a2a2a" strokeWidth="1.500" />
      <path d="M40 16l20 11v22L40 60 20 49V27z" fill="#7a7a7a" />
      <path d="M40 38l20-11v22L40 60z" fill="#6c6c6c" />
      <path d="M40 16l20 11-20 11-20-11z" fill="#858585" />
      <path d="M12 48l-4 6 7 1M68 48l4 6-7 1" fill="none" stroke="#8a8a8a" strokeWidth="2" />
    </svg>
  </div>
);

const Btn = ({ w, children, off = false }: { w: string; children: ReactNode; off?: boolean }) => (
  <div className={`${w} h-[20px] shrink-0 rounded-[3px] border ${off ? "border-[#565656] bg-[#4f4f4f] text-[#7f7f7f]" : "border-[#5e5e5e] bg-[#5b5b5b] text-[#d0d0d0]"} flex items-center justify-center text-[13px] leading-none whitespace-nowrap`}>
    {children}
  </div>
);
const Sm = ({ c = "" }: { c?: string }) => (
  <div className={`w-[18px] h-[20px] shrink-0 rounded-[3px] bg-[#5b5b5b] flex items-center justify-center ${c}`}>
    <span className="w-[10px] h-[9px] border border-black border-t-[3px] bg-[#555]" />
  </div>
);
const Radio = ({ on = false }: { on?: boolean }) => (
  <span className="w-[15px] h-[15px] rounded-full bg-[#5d5d5d] flex items-center justify-center shrink-0">
    {on && <span className="w-[9px] h-[9px] rounded-full bg-[#e8e8e8]" />}
  </span>
);
const Moon = ({ c = "#444" }: { c?: string }) => (
  <svg viewBox="0 0 14 16" className="w-[13px] h-[15px]"><path d="M2 1c7-1 11 3 11 7s-4 8-11 7c3-2 4-4 4-7S5 3 2 1z" fill={c} stroke="#ddd" strokeWidth="1.400" /></svg>
);
const StackItem = ({ name, last = false, active = false }: { name: string; last?: boolean; active?: boolean }) => (
  <div className="h-[21px] flex pl-[12px]">
    <div className={`w-[21px] ${last ? "h-[11px] items-end" : "h-full items-center"} border-l border-dotted border-black flex shrink-0`}>
      <div className="w-full border-b border-dotted border-black" />
    </div>
    <div className={`flex-1 flex items-center justify-between pl-[2px] pr-[8px] text-[13.500px] ${active ? "bg-[#5b87c0] text-white" : "text-[#e0e0e0]"}`}>
      <span>{name}</span>{active && <Moon c="#5b87c0" />}
    </div>
  </div>
);

const Rollout = () => (
  <div className="w-[229px] -ml-[2px] mt-[5px] h-[439px] bg-[#4c4c4c] text-[13px] text-[#dcdcdc] shrink-0">
    <div className="relative ml-[13px] mt-[4px] w-[202px] h-[60px] border border-[#333] rounded-[3px] grid grid-cols-[80px_80px] gap-y-[2px] pl-[11px] pt-[14px]">
      <span className="absolute left-[7px] -top-[6px] bg-[#4c4c4c] px-px leading-none">Constraints</span>
      <div className="flex items-center gap-[8px]"><Radio on /><span>None</span></div>
      <div className="flex items-center gap-[8px]"><Radio /><span>Edge</span></div>
      <div className="flex items-center gap-[8px]"><Radio /><span>Face</span></div>
      <div className="flex items-center gap-[8px]"><Radio /><span>Normal</span></div>
    </div>
    <div className="h-[19px] mt-[11px] ml-[30px] flex items-center">
      <span className="w-[13px] h-[13px] bg-[#5d5d5d]" />
      <span className="ml-[3px]">Preserve UVs</span>
      <Sm c="ml-[29px]" />
    </div>
    <div className="flex gap-[8px] ml-[16px] mt-[8px]"><Btn w="w-[94px]">Create</Btn><Btn w="w-[94px]">Collapse</Btn></div>
    <div className="flex ml-[16px] mt-[8px]"><Btn w="w-[74px]">Attach</Btn><Sm c="ml-[2px]" /><Btn w="w-[94px] ml-[8px]">Detach</Btn></div>
    <div className="ml-[13px] mt-[6px] w-[202px] h-[90px] border border-[#333] rounded-[3px] pl-[6px] pt-[7px] flex flex-col gap-[8px]">
      <div className="flex"><Btn w="w-[90px]">Slice Plane</Btn><span className="w-[13px] h-[13px] bg-[#5d5d5d] ml-[8px] mt-[3px]" /><span className="ml-[3px] mt-[2px]">Split</span></div>
      <div className="flex gap-[8px]"><Btn w="w-[90px]" off>Slice</Btn><Btn w="w-[90px]" off>Reset Plane</Btn></div>
      <div className="flex gap-[8px]"><Btn w="w-[90px]">QuickSlice</Btn><Btn w="w-[90px]">Cut</Btn></div>
    </div>
    <div className="flex ml-[16px] mt-[8px]"><Btn w="w-[74px]">MSmooth</Btn><Sm c="ml-[2px]" /><Btn w="w-[74px] ml-[8px]">Tessellate</Btn><Sm c="ml-[2px]" /></div>
    <div className="flex ml-[16px] mt-[8px] gap-[8px]"><Btn w="w-[112px]">Make Planar</Btn><Btn w="w-[20px]">X</Btn><Btn w="w-[20px]">Y</Btn><Btn w="w-[20px]">Z</Btn></div>
    <div className="flex ml-[16px] mt-[8px] gap-[8px]"><Btn w="w-[94px]">View Align</Btn><Btn w="w-[94px]">Grid Align</Btn></div>
    <div className="flex ml-[66px] mt-[8px]"><Btn w="w-[74px]">Relax</Btn><Sm c="ml-[2px]" /></div>
    <div className="flex ml-[16px] mt-[8px] gap-[8px]"><Btn w="w-[94px]" off>Hide Selected</Btn><Btn w="w-[94px]" off>Unhide All</Btn></div>
    <div className="flex ml-[54px] mt-[8px]"><Btn w="w-[120px]" off>Hide Unselected</Btn></div>
    <div className="ml-[19px] mt-[3px] text-white whitespace-nowrap">Named Selections:</div>
  </div>
);

const CommandPanel = () => (
  <div className="w-[255px] flex flex-col pl-[7px] shrink-0">
    <div className="h-[17px] flex items-center"><Handle w="w-[243px]" /></div>
    <div className="h-[34px] flex gap-[2px] shrink-0">
      <div className="w-[38px] rounded-t-[6px] bg-[#3c3c3c] flex items-center justify-center"><svg viewBox="0 0 20 20" className="w-[20px] h-[20px]"><path d="M8 0h4v8h8v4h-8v8H8v-8H0V8h8z" fill="#a6a6a6" /></svg></div>
      <div className="w-[38px] rounded-t-[6px] bg-[#454545] border-x border-t border-[#333] flex items-center justify-center">
        <svg viewBox="0 0 22 22" className="w-[22px] h-[22px]"><rect x="2" y="2" width="18" height="18" fill="none" stroke={T} strokeWidth="1.500" /><path d="M3 19C4 9 9 4 19 3" fill="none" stroke="#ccc" strokeWidth="1.500" /><path d="M0 0h4v4H0zM18 0h4v4h-4zM0 18h4v4H0zM18 18h4v4h-4z" fill={T} /></svg>
      </div>
      <div className="w-[38px] rounded-t-[6px] bg-[#3c3c3c] flex items-center justify-center">
        <svg viewBox="0 0 20 22" className="w-[20px] h-[22px]"><path d="M3 0h14v7H3z" fill="#a6a6a6" /><path d="M10 7v4M3 15v-4h14v4" fill="none" stroke={T} /><path d="M0 15h6v6H0zM14 15h6v6h-6z" fill={T} /></svg>
      </div>
      <div className="w-[38px] rounded-t-[6px] bg-[#3c3c3c] flex items-center justify-center">
        <svg viewBox="0 0 24 18" className="w-[24px] h-[18px]"><circle cx="9" cy="9" r="8" fill="none" stroke={T} /><circle cx="11" cy="9" r="8" fill="none" stroke={T} /><circle cx="15" cy="9" r="8.500" fill="#a6a6a6" /></svg>
      </div>
      <div className="w-[38px] rounded-t-[6px] bg-[#3c3c3c] flex items-center justify-center">
        <svg viewBox="0 0 20 20" className="w-[20px] h-[20px]"><path d="M0 1h20v13H0zM8 14h4v3h4v2H4v-2h4z" fill="#a6a6a6" /></svg>
      </div>
      <div className="w-[38px] rounded-t-[6px] bg-[#3c3c3c] flex items-center justify-center">
        <svg viewBox="0 0 20 20" className="w-[20px] h-[20px]"><path d="M2 1l4 4 2-1 1-3-4-1c4-1 7 3 6 7l8 9-3 3-9-9C3 11 0 6 2 1z" fill="#a6a6a6" /></svg>
      </div>
    </div>
    <div className="w-[246px] h-[704px] -mt-px border border-[#333] rounded-t-[4px] bg-[#444444] pl-[4px] pt-[10px] flex flex-col shrink-0">
      <div className="flex h-[22px] shrink-0">
        <div className="w-[208px] bg-[#656565] flex items-center pl-[4px] text-[13px] text-[#cfcfcf]">Cylinder001</div>
        <div className="w-[22px] ml-[7px] bg-[#9cc3ef] border-l border-t border-black" />
      </div>
      <div className="mt-[13px] w-[238px] h-[22px] bg-[#5e5e5e] flex items-center justify-between pl-[4px] pr-[10px] text-[13.500px] text-[#c8c8c8] shrink-0">
        <span>Modifier List</span><span className="w-0 h-0 border-x-[4px] border-x-transparent border-t-[6px] border-t-[#ddd]" />
      </div>
      <div className="mt-[6px] w-[239px] h-[126px] border border-white flex overflow-hidden shrink-0">
        <div className="flex-1">
          <div className="h-[21px] flex items-center pl-[8px] pr-[8px] text-[13.500px] text-[#e0e0e0]">
            <span className="w-0 h-0 border-x-[4px] border-x-transparent border-t-[6px] border-t-[#ccc]" />
            <span className="ml-[10px] flex-1">Editable Poly</span><Moon />
          </div>
          <StackItem name="Vertex" />
          <StackItem name="Edge" />
          <StackItem name="Border" active />
          <StackItem name="Polygon" />
          <StackItem name="Element" last />
        </div>
        <div className="w-[21px] bg-[#f0f0f0] flex flex-col items-center justify-between">
          <ChevronUp size={16} color="#555" strokeWidth={3} />
          <div className="w-[19px] h-[68px] bg-[#cdcdcd]" />
          <ChevronDown size={16} color="#555" strokeWidth={3} />
        </div>
      </div>
      <div className="mt-[9px] h-[26px] flex items-center shrink-0">
        <svg viewBox="0 0 24 24" className="w-[24px] h-[24px] ml-[3px]"><path d="M14 2l8 8-3 1-5 5-1 4-8-8 4-1 5-5zM7 15l-6 8" fill={G} stroke={G} /></svg>
        <Sep c="ml-[8px] !h-[16px]" />
        <svg viewBox="0 0 10 24" className="w-[10px] h-[24px] ml-[16px]"><path d="M1 1h8M2 1v20c0 3 6 3 6 0V1" fill="none" stroke="#999" strokeWidth="1.500" /><path d="M3 11h4v11H3z" fill={T} /></svg>
        <Sep c="ml-[16px] !h-[16px]" />
        <svg viewBox="0 0 24 24" className="w-[24px] h-[24px] ml-[7px]"><circle cx="8" cy="7" r="6" fill="none" stroke="#2f2f2f" strokeWidth="2" /><circle cx="14" cy="18" r="6" fill="none" stroke="#2f2f2f" strokeWidth="2" /><path d="M14 8h5v7" fill="none" stroke="#2f2f2f" strokeWidth="2" /></svg>
        <svg viewBox="0 0 20 24" className="w-[20px] h-[24px] ml-[9px]"><path d="M1 3h18v2H1zM7 0h6v3H7zM3 7h14v16H3z" fill={G} /><path d="M7 9v12M10 9v12M13 9v12" stroke="#444" strokeWidth="1.500" /></svg>
        <Sep c="ml-[11px] !h-[16px]" />
        <svg viewBox="0 0 24 24" className="w-[24px] h-[24px] ml-[9px]"><rect x="1" y="3" width="17" height="20" fill={G} /><path d="M3 7h13M3 12h13M3 17h13M9 7v14" stroke="#444" /><path d="M10 16L22 1l2 2-12 15-3 1z" fill={O} /></svg>
      </div>
      <div className="mt-[16px] h-[6px] flex items-center gap-[4px] pl-[6px] shrink-0">
        <div className="w-[102px] h-px bg-[#666]" /><div className="w-[12px] h-[3px] border-y border-dotted border-[#aaa] mx-[2px]" /><div className="w-[102px] h-px bg-[#666]" />
      </div>
      <div className="flex">
        <Rollout />
        <div className="ml-[3px] mt-[5px] w-[8px] h-[439px] rounded-[4px] bg-[#3e3e3e] pt-[108px] shrink-0">
          <div className="w-[6px] h-[96px] mx-auto rounded-[3px] bg-[#5c5c5c]" />
        </div>
      </div>
    </div>
  </div>
);

const AlignPanel = () => (
  <div className="absolute left-[207px] top-[675px] w-[188px] h-[110px] bg-[#5a5a5a] border-2 border-[#656565] flex text-[#d4d4d4] text-[15px]">
    <div className="w-[57px] flex flex-col items-center pt-[10px]">
      <svg viewBox="0 0 38 38" className="w-[38px] h-[38px]">
        <path d="M12 12L23 2v28L13 38z" fill="#a8d0f0" stroke="#3f9cf0" />
        <path d="M0 19h38" stroke="#aaa" strokeWidth="1.200" /><path d="M22 19h-5m0 0l3-3m-3 3l3 3" stroke="#111" strokeWidth="1.500" fill="none" />
      </svg>
      <span className="mt-[6px] text-center leading-[20px]">Make<br />Planar</span>
    </div>
    <div className="w-px h-[95px] bg-[#333] mt-[5px]" />
    <div className="w-[108px] pl-[14px] pt-[13px]">
      <div className="h-[20px] flex items-center pl-[4px]">
        <span className="w-[20px] h-[20px] border border-[#222] bg-[#9a9da3] flex items-center justify-center"><span className="w-[14px] h-[14px] bg-[#dfe3ea]" /></span>
        <span className="ml-[8px]">To View</span>
      </div>
      <div className="h-[20px] mt-[11px] flex items-center pl-[4px]">
        <span className="w-[20px] h-[20px] border border-[#222] bg-[#fafafa] grid grid-cols-3 gap-px p-px">
          {[0, 1, 2, 3, 4, 5, 6, 7, 8].map((i) => <span key={i} className="bg-[#b9b9b9]" />)}
        </span>
        <span className="ml-[8px]">To Grid</span>
      </div>
      <div className="mt-[6px] w-[89px] h-[26px] border border-[#222] flex text-[22px] font-bold text-[#bcbcbc]">
        <span className="flex-1 flex items-center justify-center bg-[#505050]">X</span>
        <span className="flex-1 flex items-center justify-center bg-[#505050] border-x border-[#222]">Y</span>
        <span className="flex-1 flex items-center justify-center bg-[#505050]">Z</span>
      </div>
    </div>
    <div className="w-[19px] bg-[#4d4d4d] flex items-center justify-center">
      <span className="[writing-mode:vertical-rl] rotate-180 font-['Liberation_Sans',sans-serif] text-[15px]">Align</span>
    </div>
  </div>
);

export default function App() {
  return (
    <div className="relative w-[1920px] h-[911px] overflow-hidden bg-[#444444] flex flex-col font-['Roboto',sans-serif]">
      <div className="h-[28px] border-t-[3px] border-[#222] border-b border-b-[#1f1f1f] bg-gradient-to-b from-[#4d4d4d] to-[#3f3f3f] flex items-center justify-between shrink-0">
        <div className="flex pl-[13px] pt-px gap-[24.500px] text-[14.400px] text-[#dcdcdc]">
          {menus.map((m) => <span key={m}>{m}</span>)}
        </div>
        <div className="flex items-center text-[13.300px] whitespace-nowrap">
          <div className="w-[120px] h-[22px] bg-[#d3d3d3] flex items-center pl-[9px] text-black">
            <svg viewBox="0 0 16 18" className="w-[16px] h-[18px] shrink-0"><path d="M8 0c3 0 4 3 4 5s-1 4-2 5v2l5 3v3H1v-3l5-3v-2C5 9 4 7 4 5s1-5 4-5z" fill="#5b87d8" stroke="#222" strokeWidth=".8" /></svg>
            <span className="ml-[5px] text-[14px]">Emanuel Ca...</span>
            <span className="ml-[1px] w-0 h-0 border-x-[5px] border-x-transparent border-t-[5px] border-t-black" />
          </div>
          <span className="ml-[24px] w-[73px] text-[#cfcfcf]">Workspaces:</span>
          <div className="ml-[6px] mr-[3px] w-[163px] h-[24px] bg-[#5e5e5e] flex items-center justify-between pl-[8px] pr-[8px] text-[15px] text-[#cfcfcf]">
            <span>Default</span>
            <span className="w-0 h-0 border-x-[4px] border-x-transparent border-t-[6px] border-t-[#ddd]" />
          </div>
        </div>
      </div>
      <MainToolbar />
      <Ribbon />
      <div className="flex h-[755px] shrink-0">
        <LeftColumn />
        <div className="w-[1276px] pt-[7px] shrink-0 grid grid-cols-[635px_636px] grid-rows-[371px_373px] gap-x-[5px] gap-y-[4px]">
          <TopViewport />
          <RightViewport />
          <BottomLeftViewport />
          <PerspViewport />
        </div>
        <CommandPanel />
      </div>
      <div className="flex-1 flex flex-col">
        <div className="h-[32px] pl-[12px] pt-[6px] flex gap-[2px] text-[14px] text-[#c4c4c4]">
          <div className="w-[18px] h-[20px] rounded-[3px] bg-[#5c5c5c] flex items-center justify-center">&lt;</div>
          <div className="w-[154px] h-[20px] rounded-[3px] bg-[#5c5c5c] flex items-center justify-center">0 / 100</div>
          <div className="w-[18px] h-[20px] rounded-[3px] bg-[#5c5c5c] flex items-center justify-center">&gt;</div>
        </div>
        <div className="flex-1 border-t border-[#1c1c1c] flex pl-[11px]">
          <div className="w-[62px] bg-[#484848]" />
          <div className="w-[3px] bg-[#333]" />
          <div className="w-[9px] bg-[#8b8530]" />
          <div className="w-[1785px] bg-[#333] bg-[repeating-linear-gradient(90deg,#6a6a6a_0,#6a6a6a_1px,transparent_1px,transparent_18px)]" />
        </div>
      </div>
      <AlignPanel />
    </div>
  );
}
